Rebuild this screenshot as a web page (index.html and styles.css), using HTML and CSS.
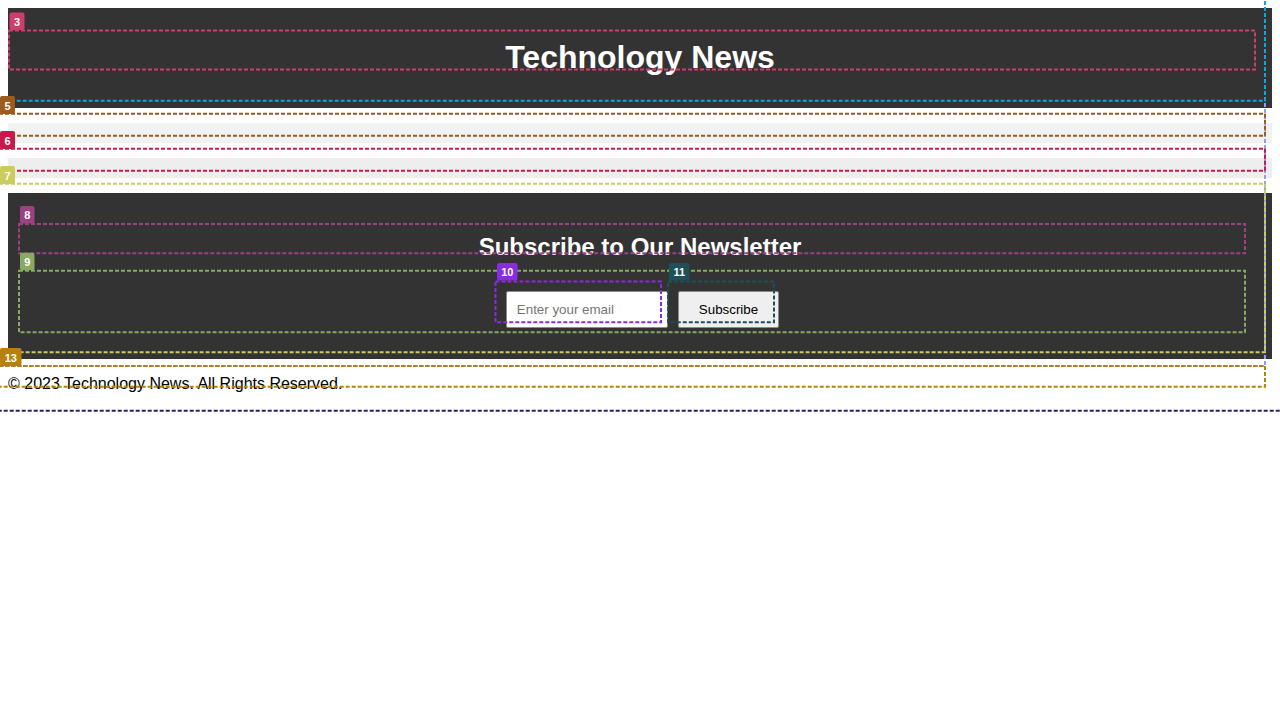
FILE: index.html
```html
<!DOCTYPE html>
<html lang="en">
<head>
<meta charset="utf-8">
<title>Technology News</title>
<link rel="stylesheet" href="styles.css">
</head>
<body>
<header class="site-header">
  <h1 class="site-title">Technology News</h1>
</header>
<section class="news-section news-section-a"></section>
<section class="news-section news-section-b"></section>
<section class="newsletter">
  <h2 class="newsletter-title">Subscribe to Our Newsletter</h2>
  <form class="newsletter-form">
    <input class="newsletter-input" type="email" placeholder="Enter your email">
    <button class="newsletter-button" type="button">Subscribe</button>
  </form>
</section>
<footer class="site-footer">
  <p class="footer-text">© 2023 Technology News. All Rights Reserved.</p>
</footer>

<svg class="marks" width="1280" height="720" viewBox="0 0 1280 720" xmlns="http://www.w3.org/2000/svg">
  <g class="mark-boxes" fill="none" stroke-width="2" stroke-dasharray="4 2">
    <rect x="-2" y="-4" width="1267" height="370" stroke="#8f9ff0"/>
    <rect x="-2" y="-4" width="1267" height="104.7" stroke="#0ea5e0"/>
    <rect x="9" y="30.5" width="1246" height="39" stroke="#cf3e6a"/>
    <rect x="-1" y="113.7" width="1266" height="22" stroke="#9c5a1c"/>
    <rect x="-1" y="148.7" width="1266" height="22" stroke="#c8184c"/>
    <rect x="-1" y="183.7" width="1266" height="168.6" stroke="#cccc5c"/>
    <rect x="19" y="224" width="1226" height="29.3" stroke="#9a4282"/>
    <rect x="19" y="270.7" width="1226" height="61.6" stroke="#88aa62"/>
    <rect x="495.5" y="281.5" width="165.5" height="40.8" stroke="#8a2be2"/>
    <rect x="668" y="281.5" width="106" height="40.8" stroke="#1d5058"/>
    <rect x="-1" y="366" width="1266" height="20.7" stroke="#b8800c"/>
    <rect x="-1" y="-4" width="1282" height="414.7" stroke="#221f66"/>
  </g>
  <g class="mark-labels">
    <rect x="9.5" y="12.5" width="15" height="17.5" rx="2" fill="#cf3e6a"/>
    <text x="17" y="25.5">3</text>
    <rect x="0" y="96" width="15" height="18" rx="2" fill="#9c5a1c"/>
    <text x="7.5" y="109.5">5</text>
    <rect x="0" y="131" width="15" height="18" rx="2" fill="#c8184c"/>
    <text x="7.5" y="144.5">6</text>
    <rect x="0" y="166" width="15" height="18" rx="2" fill="#cccc5c"/>
    <text x="7.5" y="179.5">7</text>
    <rect x="20" y="206" width="14.5" height="17.5" rx="2" fill="#9a4282"/>
    <text x="27.3" y="219">8</text>
    <rect x="20" y="252.7" width="14.5" height="17.5" rx="2" fill="#88aa62"/>
    <text x="27.3" y="265.8">9</text>
    <rect x="497" y="263" width="20.5" height="17.5" rx="2" fill="#8a2be2"/>
    <text x="507.3" y="276">10</text>
    <rect x="669" y="263" width="20.5" height="17.5" rx="2" fill="#1d5058"/>
    <text x="679.3" y="276">11</text>
    <rect x="0" y="348" width="21.5" height="18" rx="2" fill="#b8800c"/>
    <text x="10.8" y="361.5">13</text>
  </g>
</svg>
</body>
</html>
```

FILE: styles.css
```css
html {
  background: #ffffff;
}

body {
  margin: 8px;
  font-family: "Liberation Sans", Arial, sans-serif;
  font-size: 16px;
  color: #000000;
}

.site-header {
  background: #333333;
  color: #ffffff;
  padding: 10px;
  text-align: center;
}

.site-title {
  font-size: 32px;
  font-weight: bold;
  margin: 21.44px 0;
}

.news-section {
  margin: 15px 0;
  padding: 10px;
}

.news-section-a {
  background: #f2f2f2;
}

.news-section-b {
  background: #eeeeee;
}

.newsletter {
  margin: 15px 0;
  padding: 20px;
  background: #333333;
  color: #ffffff;
  text-align: center;
}

.newsletter-title {
  font-size: 24px;
  font-weight: bold;
  margin: 19.92px 0;
}

.newsletter-form {
  display: flex;
  justify-content: center;
  align-items: stretch;
  gap: 10px;
  padding: 10px 10px 11px 15px;
  margin: 0;
}

.newsletter-input {
  box-sizing: border-box;
  width: 162px;
  height: 37px;
  padding: 10px;
  border: 1px solid #8a8a8a;
  border-radius: 2px;
  background: #ffffff;
  font-family: "Liberation Sans", Arial, sans-serif;
  font-size: 13.333px;
  color: #000000;
}

.newsletter-input::placeholder {
  color: #757575;
}

.newsletter-button {
  box-sizing: border-box;
  height: 37px;
  padding: 10px 20px;
  border: 1px solid #8a8a8a;
  border-radius: 2px;
  background: #efefef;
  font-family: "Liberation Sans", Arial, sans-serif;
  font-size: 13.333px;
  color: #000000;
}

.site-footer {
  margin-top: 16px;
}

.footer-text {
  margin: 0;
}

.marks {
  position: absolute;
  top: 0;
  left: 0;
  pointer-events: none;
  overflow: visible;
}

.mark-labels text {
  fill: #ffffff;
  font-family: "Liberation Sans", Arial, sans-serif;
  font-size: 11px;
  font-weight: bold;
  text-anchor: middle;
}
```
